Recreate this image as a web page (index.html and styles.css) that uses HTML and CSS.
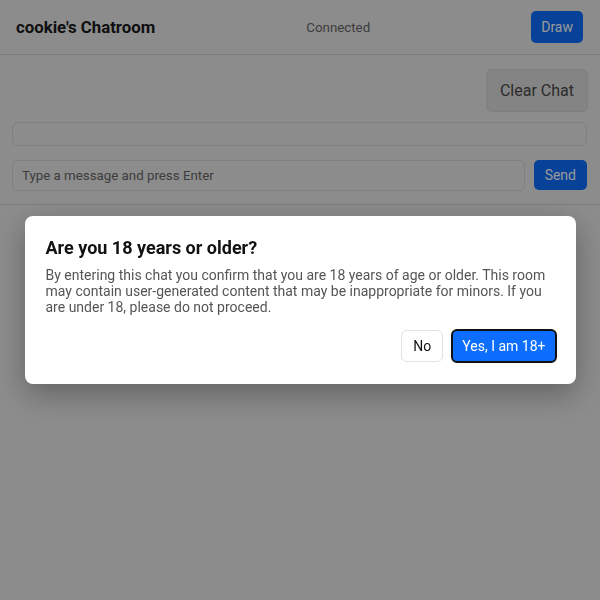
FILE: index.html
```html
<!DOCTYPE html>
<html lang="en">
<head>
    <meta charset="UTF-8">
    <meta name="viewport" content="width=device-width, initial-scale=1.0">
    <title>cookie's Chatroom</title>
    <link rel="stylesheet" href="styles.css">
</head>
<body>
    <header class="chat-header">
        <h1 class="room-title">cookie's Chatroom</h1>
        <span class="status">Connected</span>
        <button class="btn btn-primary draw-button">Draw</button>
    </header>

    <main class="chat-area">
        <div class="toolbar">
            <button class="btn clear-button">Clear Chat</button>
        </div>
        <div class="messages" id="messages"></div>
        <form class="composer">
            <input class="message-input" type="text" placeholder="Type a message and press Enter">
            <button class="btn btn-primary send-button" type="submit">Send</button>
        </form>
    </main>

    <div class="modal-backdrop">
        <div class="modal">
            <h2 class="modal-title">Are you 18 years or older?</h2>
            <p class="modal-text">By entering this chat you confirm that you are 18 years of age or older. This room may contain user-generated content that may be inappropriate for minors. If you are under 18, please do not proceed.</p>
            <div class="modal-actions">
                <button class="btn btn-light">No</button>
                <button class="btn btn-primary btn-focus">Yes, I am 18+</button>
            </div>
        </div>
    </div>
</body>
</html>
```

FILE: styles.css
```css
* {
    margin: 0;
    padding: 0;
    box-sizing: border-box;
}

body {
    background-color: #e9e9e9;
    color: #222;
    font-family: Roboto, "Liberation Sans", Arial, sans-serif;
    height: 100vh;
    overflow: hidden;
}

.btn {
    font-family: inherit;
    border: 1px solid transparent;
    border-radius: 5px;
    cursor: pointer;
}

.btn-primary {
    background-color: #0d6efd;
    color: #fff;
}

/* header */
.chat-header {
    height: 55px;
    display: flex;
    align-items: center;
    justify-content: space-between;
    padding: 0 17px 0 16px;
    border-bottom: 1px solid #d0d0d0;
}

.room-title {
    font-size: 16.8px;
    font-weight: 700;
    color: #1a1a1a;
}

.status {
    font-size: 13.3px;
    color: #666;
    margin-right: 10px;
}

.draw-button {
    height: 32px;
    padding: 0 9px;
    font-size: 14px;
}

/* chat */
.chat-area {
    display: flex;
    flex-direction: column;
    gap: 10px;
    padding: 14px 13px 13px 12px;
    border-bottom: 1px solid #d0d0d0;
}

.toolbar {
    display: flex;
    justify-content: flex-end;
    margin-right: -1px;
}

.clear-button {
    height: 43px;
    padding: 0 13px;
    font-size: 16px;
    color: #4a4a4a;
    background-color: #dcdcdc;
    border-color: #d2d2d2;
    border-radius: 6px;
}

.messages {
    height: 24px;
    border: 1px solid #d5d5d5;
    border-radius: 6px;
    margin-bottom: 4px;
}

.composer {
    display: flex;
    align-items: flex-start;
    gap: 9px;
}

.message-input {
    flex: 1;
    height: 31px;
    padding: 0 9px;
    font-family: inherit;
    font-size: 13.3px;
    background: transparent;
    border: 1px solid #d5d5d5;
    border-radius: 5px;
}

.message-input::placeholder {
    color: #666;
}

.send-button {
    height: 30px;
    padding: 0 10px;
    font-size: 14px;
}

/* age check */
.modal-backdrop {
    position: fixed;
    inset: 0;
    background-color: rgba(0, 0, 0, 0.4);
    display: flex;
    align-items: center;
    justify-content: center;
    z-index: 100;
}

.modal {
    width: 551px;
    background-color: #fff;
    border-radius: 8px;
    padding: 21px 20px 21px 21px;
    box-shadow: 0 10px 30px rgba(0, 0, 0, 0.3);
}

.modal-title {
    font-size: 18px;
    font-weight: 700;
    line-height: 22px;
    color: #111;
    margin-bottom: 8px;
}

.modal-text {
    font-size: 14px;
    line-height: 16px;
    color: #555;
}

.modal-actions {
    display: flex;
    justify-content: flex-end;
    align-items: center;
    gap: 8px;
    margin-top: 14px;
    margin-right: -1px;
}

.btn-light {
    height: 32px;
    padding: 0 11px;
    font-size: 14px;
    background-color: #fff;
    border-color: #e2e2e2;
    border-radius: 6px;
    color: #111;
}

.btn-focus {
    height: 34px;
    padding: 0 9px;
    font-size: 14px;
    border: 2px solid #111;
    border-radius: 6px;
}
```
